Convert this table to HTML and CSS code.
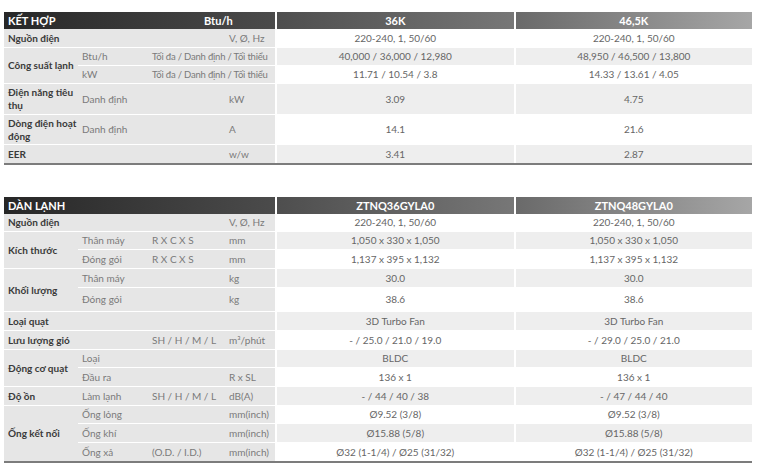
FILE: index.html
```html
<!DOCTYPE html>
<html lang="vi">
<head>
<meta charset="utf-8">
<title>Thông số kỹ thuật</title>
<link rel="stylesheet" href="styles.css">
</head>
<body>
<table class="spec spec-first">
  <colgroup><col class="c1"><col class="c2"><col class="c3"><col class="c4"><col class="cv"><col class="cv"></colgroup>
  <thead>
    <tr class="hrow">
      <th colspan="4" class="hlab"><span class="htitle">KẾT HỢP</span><span class="hunit">Btu/h</span></th>
      <th class="hv hv1">36K</th>
      <th class="hv hv2">46,5K</th>
    </tr>
  </thead>
  <tbody>
    <tr class="h19">
      <td colspan="3" class="lab">Nguồn điện</td><td class="sub">V, Ø, Hz</td>
      <td class="v">220-240, 1, 50/60</td><td class="v">220-240, 1, 50/60</td>
    </tr>
    <tr class="h18 alt">
      <td rowspan="2" class="lab">Công suất lạnh</td><td class="sub">Btu/h</td><td colspan="2" class="sub tight">Tối đa / Danh định / Tối thiểu</td>
      <td class="v">40,000 / 36,000 / 12,980</td><td class="v">48,950 / 46,500 / 13,800</td>
    </tr>
    <tr class="h18">
      <td class="sub">kW</td><td colspan="2" class="sub tight">Tối đa / Danh định / Tối thiểu</td>
      <td class="v">11.71 / 10.54 / 3.8</td><td class="v">14.33 / 13.61 / 4.05</td>
    </tr>
    <tr class="h31 alt">
      <td class="lab">Điện năng tiêu<br>thụ</td><td colspan="2" class="sub">Danh định</td><td class="sub">kW</td>
      <td class="v">3.09</td><td class="v">4.75</td>
    </tr>
    <tr class="h30">
      <td class="lab">Dòng điện hoạt<br>động</td><td colspan="2" class="sub">Danh định</td><td class="sub">A</td>
      <td class="v">14.1</td><td class="v">21.6</td>
    </tr>
    <tr class="h18 alt end">
      <td colspan="3" class="lab">EER</td><td class="sub">w/w</td>
      <td class="v">3.41</td><td class="v">2.87</td>
    </tr>
  </tbody>
</table>

<table class="spec">
  <colgroup><col class="c1"><col class="c2"><col class="c3"><col class="c4"><col class="cv"><col class="cv"></colgroup>
  <thead>
    <tr class="hrow">
      <th colspan="4" class="hlab"><span class="htitle">DÀN LẠNH</span></th>
      <th class="hv hv1">ZTNQ36GYLA0</th>
      <th class="hv hv2">ZTNQ48GYLA0</th>
    </tr>
  </thead>
  <tbody>
    <tr class="h18">
      <td colspan="3" class="lab">Nguồn điện</td><td class="sub">V, Ø, Hz</td>
      <td class="v">220-240, 1, 50/60</td><td class="v">220-240, 1, 50/60</td>
    </tr>
    <tr class="h18 alt">
      <td rowspan="2" class="lab">Kích thước</td><td class="sub">Thân máy</td><td class="sub">R X C X S</td><td class="sub">mm</td>
      <td class="v">1,050 x 330 x 1,050</td><td class="v">1,050 x 330 x 1,050</td>
    </tr>
    <tr class="h19">
      <td class="sub">Đóng gói</td><td class="sub">R X C X S</td><td class="sub">mm</td>
      <td class="v">1,137 x 395 x 1,132</td><td class="v">1,137 x 395 x 1,132</td>
    </tr>
    <tr class="h19 alt">
      <td rowspan="2" class="lab">Khối lượng</td><td colspan="2" class="sub">Thân máy</td><td class="sub">kg</td>
      <td class="v">30.0</td><td class="v">30.0</td>
    </tr>
    <tr class="h24">
      <td colspan="2" class="sub">Đóng gói</td><td class="sub">kg</td>
      <td class="v">38.6</td><td class="v">38.6</td>
    </tr>
    <tr class="h19 alt">
      <td colspan="4" class="lab">Loại quạt</td>
      <td class="v">3D Turbo Fan</td><td class="v">3D Turbo Fan</td>
    </tr>
    <tr class="h19">
      <td colspan="2" class="lab">Lưu lượng gió</td><td class="sub">SH / H / M / L</td><td class="sub">m³/phút</td>
      <td class="v">- / 25.0 / 21.0 / 19.0</td><td class="v">- / 29.0 / 25.0 / 21.0</td>
    </tr>
    <tr class="h18 alt">
      <td rowspan="2" class="lab">Động cơ quạt</td><td colspan="3" class="sub">Loại</td>
      <td class="v">BLDC</td><td class="v">BLDC</td>
    </tr>
    <tr class="h19">
      <td colspan="2" class="sub">Đầu ra</td><td class="sub">R x SL</td>
      <td class="v">136 x 1</td><td class="v">136 x 1</td>
    </tr>
    <tr class="h19 alt">
      <td class="lab">Độ ồn</td><td class="sub">Làm lạnh</td><td class="sub">SH / H / M / L</td><td class="sub">dB(A)</td>
      <td class="v">- / 44 / 40 / 38</td><td class="v">- / 47 / 44 / 40</td>
    </tr>
    <tr class="h18">
      <td rowspan="3" class="lab end-cell">Ống kết nối</td><td colspan="2" class="sub">Ống lỏng</td><td class="sub">mm(inch)</td>
      <td class="v">Ø9.52 (3/8)</td><td class="v">Ø9.52 (3/8)</td>
    </tr>
    <tr class="h19 alt">
      <td colspan="2" class="sub">Ống khí</td><td class="sub">mm(inch)</td>
      <td class="v">Ø15.88 (5/8)</td><td class="v">Ø15.88 (5/8)</td>
    </tr>
    <tr class="h18 end">
      <td class="sub">Ống xả</td><td class="sub">(O.D. / I.D.)</td><td class="sub">mm(inch)</td>
      <td class="v">Ø32 (1-1/4) / Ø25 (31/32)</td><td class="v">Ø32 (1-1/4) / Ø25 (31/32)</td>
    </tr>
  </tbody>
</table>
</body>
</html>
```

FILE: styles.css
```css
html, body {
  margin: 0;
  background: #ffffff;
}
body {
  padding: 12px 0 0 4px;
  font-family: Lato, "Open Sans", "Liberation Sans", sans-serif;
  font-size: 10px;
  color: #666666;
}
.spec {
  width: 748px;
  table-layout: fixed;
  border-collapse: separate;
  border-spacing: 0;
  border-bottom: 2px solid #7c7c7c;
}
.spec-first {
  margin-bottom: 32px;
}
.c1 { width: 74px; }
.c2 { width: 70px; }
.c3 { width: 77px; }
.c4 { width: 50px; }

.spec th,
.spec td {
  padding: 0 0 0 4px;
  vertical-align: middle;
  line-height: 13px;
  white-space: nowrap;
  border-bottom: 1px solid #ffffff;
}
.hrow { height: 17px; }
.spec th {
  color: #ffffff;
  font-weight: 700;
  font-size: 11px;
  border-bottom: 0;
}
.hlab {
  text-align: left;
  background: linear-gradient(to right, #272727, #4b4b4b);
}
.htitle,
.hunit {
  display: inline-block;
}
.spec-first .htitle { width: 196px; }
.spec th.hv {
  text-align: center;
  padding: 0;
  border-left: 2px solid #ffffff;
}
.hv1 { background: linear-gradient(to right, #4e4e4e, #777777); }
.hv2 { background: linear-gradient(to right, #6a6a6a, #a6a6a6); }

.lab {
  background: #e6e6e6;
  color: #3a3a3a;
  font-weight: 700;
}
.sub {
  background: #e6e6e6;
  color: #7a7a7a;
}
.tight {
  font-size: 9.5px;
  letter-spacing: -0.2px;
}
.spec td.v {
  text-align: center;
  padding: 0;
  color: #666666;
  border-left: 2px solid #ffffff;
  background: #ffffff;
}
.alt td.v { background: #eeeeee; }

.end td,
.spec td.end-cell { border-bottom: 0; }

.h18 { height: 18px; }
.h19 { height: 19px; }
.h24 { height: 24px; }
.h30 { height: 30px; }
.h31 { height: 31px; }
```
